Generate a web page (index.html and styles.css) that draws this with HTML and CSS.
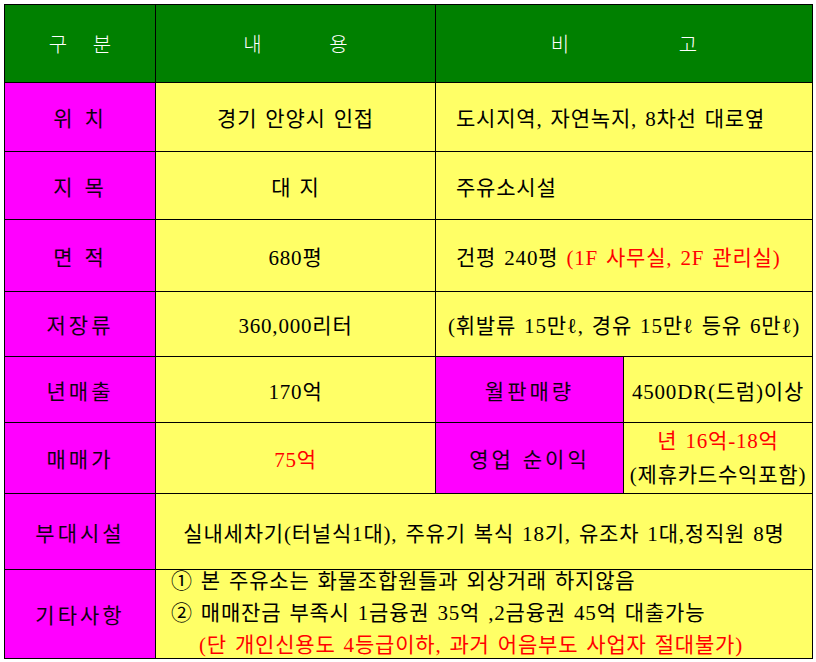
FILE: index.html
```html
<!DOCTYPE html>
<html lang="ko">
<head>
<meta charset="utf-8">
<title>주유소 매물</title>
<link rel="stylesheet" href="styles.css">
</head>
<body>
<table class="sheet">
  <colgroup>
    <col class="c1"><col class="c2"><col class="c3"><col class="c4">
  </colgroup>
  <tr class="r-head">
    <th class="hd hd-1">구 분</th>
    <th class="hd hd-2">내 용</th>
    <th class="hd hd-3" colspan="2">비 고</th>
  </tr>
  <tr class="r1">
    <td class="lbl">위 치</td>
    <td class="val">경기 안양시 인접</td>
    <td class="val left" colspan="2">도시지역, 자연녹지, 8차선 대로옆</td>
  </tr>
  <tr class="r2">
    <td class="lbl">지 목</td>
    <td class="val">대 지</td>
    <td class="val left" colspan="2">주유소시설</td>
  </tr>
  <tr class="r3">
    <td class="lbl">면 적</td>
    <td class="val">680평</td>
    <td class="val left" colspan="2">건평 240평 <span class="red">(1F 사무실, 2F 관리실)</span></td>
  </tr>
  <tr class="r4">
    <td class="lbl">저장류</td>
    <td class="val">360,000리터</td>
    <td class="val" colspan="2">(휘발류 15만ℓ, 경유 15만ℓ 등유 6만ℓ)</td>
  </tr>
  <tr class="r5">
    <td class="lbl">년매출</td>
    <td class="val">170억</td>
    <td class="lbl">월판매량</td>
    <td class="val">4500DR(드럼)이상</td>
  </tr>
  <tr class="r6">
    <td class="lbl">매매가</td>
    <td class="val red">75억</td>
    <td class="lbl">영업 순이익</td>
    <td class="val two"><span class="red line">년 16억-18억</span><span class="line">(제휴카드수익포함)</span></td>
  </tr>
  <tr class="r7">
    <td class="lbl">부대시설</td>
    <td class="val" colspan="3">실내세차기(터널식1대), 주유기 복식 18기, 유조차 1대,정직원 8명</td>
  </tr>
  <tr class="r8">
    <td class="lbl">기타사항</td>
    <td class="val notes" colspan="3">
      <div class="notes-in">
        <div class="note">① 본 주유소는 화물조합원들과 외상거래 하지않음</div>
        <div class="note">② 매매잔금 부족시 1금융권 35억 ,2금융권 45억 대출가능</div>
        <div class="note red indent">(단 개인신용도 4등급이하, 과거 어음부도 사업자 절대불가)</div>
      </div>
    </td>
  </tr>
</table>
</body>
</html>
```

FILE: styles.css
```css
html, body {
  margin: 0;
  padding: 0;
  background: #ffffff;
}

body {
  padding: 4px;
}

.sheet {
  border-collapse: collapse;
  table-layout: fixed;
  width: 809px;
  font-size: 20px;
}

.c1 { width: 151px; }
.c2 { width: 280px; }
.c3 { width: 188px; }
.c4 { width: 189px; }

.sheet th,
.sheet td {
  border: 1px solid #000;
  padding: 0;
  text-align: center;
  vertical-align: middle;
  overflow: hidden;
  white-space: nowrap;
}

.r-head { height: 78px; }
.r1 { height: 69px; }
.r2 { height: 68px; }
.r3 { height: 72px; }
.r4 { height: 65px; }
.r5 { height: 66px; }
.r6 { height: 71px; }
.r7 { height: 76px; }
.r8 { height: 89px; }

.sheet .hd {
  background: #008000;
  color: #ffffff;
  font-family: "Noto Sans CJK KR", "Noto Sans", sans-serif;
  font-weight: 300;
  font-size: 20px;
}

.sheet .hd-1 { word-spacing: 20px; }
.sheet .hd-2 { word-spacing: 62px; }
.sheet .hd-3 { word-spacing: 104px; }

.sheet .lbl {
  background: #ff00ff;
  color: #100010;
  font-family: "Noto Sans CJK KR", "Noto Sans", sans-serif;
  font-weight: 400;
  font-size: 21px;
  letter-spacing: 3px;
}

.sheet .val {
  background: #ffff66;
  color: #000;
  font-family: "Liberation Serif", "Noto Sans CJK KR", serif;
  font-size: 21px;
  letter-spacing: 0.8px;
  word-spacing: 2px;
}

.sheet .val.left {
  text-align: left;
  padding-left: 20px;
}

.sheet .red {
  color: #ff0000;
}

.sheet .two .line {
  display: block;
  line-height: 34px;
}

.sheet .notes {
  text-align: left;
  vertical-align: top;
  padding: 0 0 0 15px;
}

.notes-in {
  margin: -5px 0 -4px;
}

.note {
  line-height: 32px;
}

.note.indent {
  padding-left: 28px;
}
```
